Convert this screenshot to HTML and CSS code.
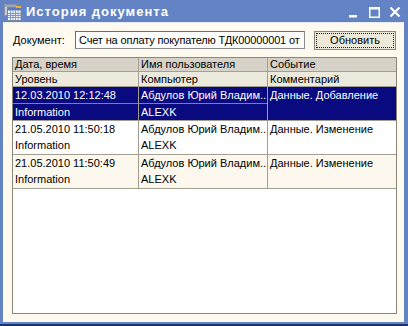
FILE: index.html
```html
<!DOCTYPE html>
<html lang="ru">
<head>
<meta charset="utf-8">
<title>История документа</title>
<link rel="stylesheet" href="styles.css">
</head>
<body>
<div class="window">
  <div class="titlebar">
    <svg class="app-icon" width="18" height="17" viewBox="0 0 18 17">
      <rect x="0.5" y="0.5" width="12" height="11" fill="#c8cdd8" stroke="#8a94a8"/>
      <rect x="1" y="1" width="11" height="2" fill="#9aa6c0"/>
      <rect x="3.5" y="3.5" width="13.5" height="13" fill="#ffffff" stroke="#7a86a0"/>
      <rect x="4" y="4" width="13" height="2.5" fill="#5b78b8"/>
      <rect x="12" y="2" width="5" height="2" fill="#f0b030"/>
      <path d="M4 9.5h13M4 11.5h13M4 13.5h13M6.5 6.5v10M9 6.5v10M11.5 6.5v10M14 6.5v10" stroke="#7c98cc" stroke-width="1"/>
    </svg>
    <span class="title">История документа</span>
    <svg class="controls" width="56" height="22" viewBox="0 0 56 22">
      <rect x="1" y="15" width="8" height="2.5" fill="#ffffff"/>
      <rect x="21.75" y="7.75" width="9.5" height="9.5" fill="none" stroke="#ffffff" stroke-width="1.5"/>
      <rect x="21" y="7" width="11" height="2.5" fill="#ffffff"/>
      <path d="M42.5 7.5l9 9M51.5 7.5l-9 9" stroke="#ffffff" stroke-width="2.2"/>
    </svg>
  </div>
  <div class="body">
    <div class="doc-row">
      <span class="label">Документ:</span>
      <div class="input">Счет на оплату покупателю ТДК00000001 от</div>
      <button class="btn"><span class="focus">Обновить</span></button>
    </div>
    <div class="grid">
      <div class="row head1">
        <div class="cell">Дата, время</div>
        <div class="cell">Имя пользователя</div>
        <div class="cell">Событие</div>
      </div>
      <div class="row head2">
        <div class="cell">Уровень</div>
        <div class="cell">Компьютер</div>
        <div class="cell">Комментарий</div>
      </div>
      <div class="row data selected">
        <div class="cell"><div class="line split">12.03.2010 12:12:48</div><div class="line">Information</div></div>
        <div class="cell"><div class="line split">Абдулов Юрий Владим...</div><div class="line">ALEXK</div></div>
        <div class="cell"><div class="line">Данные. Добавление</div><div class="line"></div></div>
      </div>
      <div class="row data">
        <div class="cell"><div class="line">21.05.2010 11:50:18</div><div class="line">Information</div></div>
        <div class="cell"><div class="line">Абдулов Юрий Владим...</div><div class="line">ALEXK</div></div>
        <div class="cell"><div class="line">Данные. Изменение</div><div class="line"></div></div>
      </div>
      <div class="row data alt">
        <div class="cell"><div class="line">21.05.2010 11:50:49</div><div class="line">Information</div></div>
        <div class="cell"><div class="line">Абдулов Юрий Владим...</div><div class="line">ALEXK</div></div>
        <div class="cell"><div class="line">Данные. Изменение</div><div class="line"></div></div>
      </div>
      <div class="empty"></div>
    </div>
  </div>
</div>
</body>
</html>
```
FILE: styles.css
```css
html, body {
  margin: 0;
  padding: 0;
}
body {
  font-family: "Liberation Sans", Arial, sans-serif;
  font-size: 11px;
  color: #000;
}
.window {
  width: 408px;
  height: 326px;
  box-sizing: border-box;
  background: #6383c5;
  border-bottom: 2px solid #1c3270;
  display: flex;
  flex-direction: column;
}
.titlebar {
  height: 22px;
  display: flex;
  align-items: center;
  flex: 0 0 22px;
}
.app-icon {
  margin-left: 4px;
  margin-top: 2px;
  flex: 0 0 auto;
}
.title {
  margin-left: 4px;
  font-weight: bold;
  font-size: 13px;
  color: #ffffff;
  letter-spacing: 1px;
}
.controls {
  margin-left: auto;
  margin-right: 4px;
  align-self: flex-start;
}
.body {
  flex: 1;
  margin: 0 4px 2px 3px;
  background: #fffaf0;
  border-top: 1px solid #e8ecf4;
  padding: 8px 7px 8px 9px;
  display: flex;
  flex-direction: column;
  min-height: 0;
}
.doc-row {
  display: flex;
  align-items: center;
  height: 18px;
  margin-bottom: 8px;
}
.label {
  flex: 0 0 62px;
  padding-left: 1px;
}
.input {
  width: 230px;
  height: 18px;
  box-sizing: border-box;
  border: 1px solid #8c8c8c;
  border-top-color: #6e6e6e;
  border-left-color: #6e6e6e;
  background: #ffffff;
  padding-left: 3px;
  line-height: 16px;
  white-space: nowrap;
  overflow: hidden;
  letter-spacing: -0.15px;
  margin-right: 9px;
}
.btn {
  width: 82px;
  height: 19px;
  box-sizing: border-box;
  border: 1px solid #8a877b;
  background: #ece9d8;
  font-family: inherit;
  font-size: 11px;
  padding: 1px;
  display: flex;
}
.focus {
  flex: 1;
  border: 1px dotted #222;
  line-height: 13px;
  text-align: center;
}
.grid {
  flex: 1;
  border: 1px solid #8b8778;
  background: #ffffff;
  display: flex;
  flex-direction: column;
}
.row {
  display: grid;
  grid-template-columns: 126px 129px 1fr;
  border-bottom: 1px solid #a3a092;
}
.cell {
  border-right: 1px solid #a3a092;
  padding-left: 2px;
  white-space: nowrap;
  overflow: hidden;
}
.cell:last-child {
  border-right: none;
}
.head1 {
  background: #d6d2c7;
  height: 13px;
  line-height: 13px;
}
.head2 {
  background: #ece9dd;
  height: 14px;
  line-height: 14px;
}
.data {
  height: 33px;
  box-sizing: content-box;
}
.line {
  height: 16px;
  line-height: 17px;
}
.selected {
  background: #0a0a80;
  color: #ffffff;
}
.selected .line.split {
  border-bottom: 1px solid #7d7da8;
  margin-left: -2px;
  padding-left: 2px;
}
.alt {
  background: #fdf8ee;
}
.empty {
  flex: 1;
}
```
